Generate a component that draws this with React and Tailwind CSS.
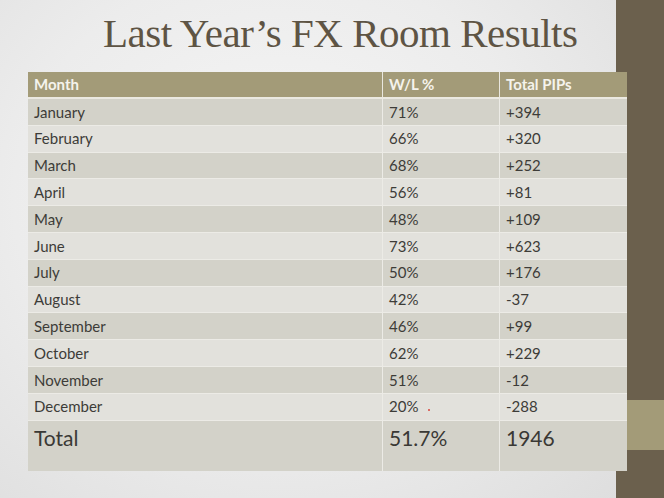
import React from 'react';

const rows = [
  ['January', '71%', '+394'],
  ['February', '66%', '+320'],
  ['March', '68%', '+252'],
  ['April', '56%', '+81'],
  ['May', '48%', '+109'],
  ['June', '73%', '+623'],
  ['July', '50%', '+176'],
  ['August', '42%', '-37'],
  ['September', '46%', '+99'],
  ['October', '62%', '+229'],
  ['November', '51%', '-12'],
  ['December', '20%', '-288'],
];

const App = () => {
  return (
    <div className="flex w-[664px] h-[498px] overflow-hidden font-['Lato',sans-serif]">
      {/* Slide body */}
      <div className="w-[616px] h-full flex flex-col bg-[radial-gradient(ellipse_at_45%_40%,#f6f6f6_0%,#ececec_55%,#dedede_100%)]">
        <h1 className="h-[72px] pl-[103px] pt-[9px] text-[41px] leading-[48px] text-[#5e5444] font-['Liberation_Serif',serif] tracking-[-0.5px] whitespace-nowrap">
          Last Year’s FX Room Results
        </h1>

        {/* Results table, runs a little past the edge of the side strip */}
        <div className="relative z-10 ml-[28px] mr-[-11px] flex flex-col text-[15px] text-[#3d3c38]">
          <div className="flex h-[27px] bg-[#a39b78] border-b-2 border-[#ebe9e1] font-bold text-[#f5f3ec]">
            <div className="w-[355px] pl-[6px] flex items-center border-r border-[#e9e7df]">Month</div>
            <div className="w-[117px] pl-[6px] flex items-center border-r border-[#e9e7df]">W/L %</div>
            <div className="flex-1 pl-[6px] flex items-center">Total PIPs</div>
          </div>

          {rows.map(([month, wl, pips], i) => (
            <div
              key={month}
              className={`flex h-[26.8px] border-b border-[#ecebe6] ${i % 2 === 0 ? 'bg-[#d3d2c9]' : 'bg-[#e2e1dc]'}`}
            >
              <div className="w-[355px] pl-[6px] flex items-center border-r border-[#ecebe6]">{month}</div>
              <div className="w-[117px] pl-[6px] flex items-center border-r border-[#ecebe6]">
                {wl}
                {month === 'December' && (
                  <span className="ml-[10px] mt-[6px] w-[2px] h-[2px] rounded-full bg-[#d9453d]"></span>
                )}
              </div>
              <div className="flex-1 pl-[6px] flex items-center">{pips}</div>
            </div>
          ))}

          <div className="flex h-[50px] bg-[#d3d2c9] text-[21px] text-[#3a3935]">
            <div className="w-[355px] pl-[6px] pt-[1px] border-r border-[#ecebe6]">Total</div>
            <div className="w-[117px] pl-[6px] pt-[1px] border-r border-[#ecebe6]">51.7%</div>
            <div className="flex-1 pl-[6px] pt-[1px]">1946</div>
          </div>
        </div>
      </div>

      {/* Right side strip */}
      <div className="flex-1 flex flex-col">
        <div className="h-[400px] bg-[#6b604d]"></div>
        <div className="h-[50px] bg-[#a39b78]"></div>
        <div className="flex-1 bg-[#6b604d]"></div>
      </div>
    </div>
  );
};

export default App;
